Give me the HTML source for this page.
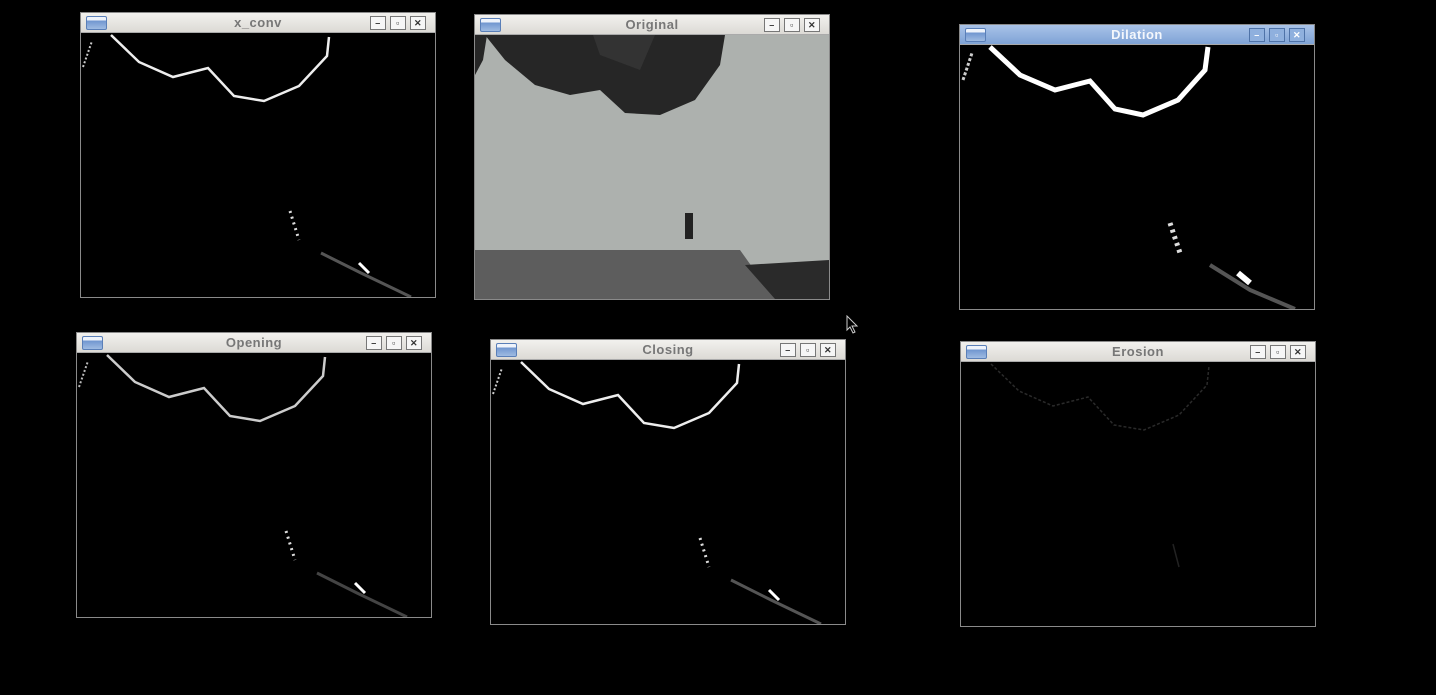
<!DOCTYPE html>
<html><head><style>
body{margin:0;width:1436px;height:695px;background:#000;position:relative;overflow:hidden;font-family:"Liberation Sans",sans-serif}
.w{position:absolute;width:354px;height:284px;border:1px solid #8a8a8a;background:#000}
.t{height:19px;background:linear-gradient(#f2f1ee,#dcdad5);border-bottom:1px solid #aaa;position:relative;text-align:center;font-weight:bold;font-size:13px;color:#777;line-height:19px;letter-spacing:.5px}
.b .t{background:linear-gradient(#a9c3e8,#7fa3d6);color:#f4f7fc}
.ic{position:absolute;left:5px;top:3px;width:19px;height:12px;border:1px solid #5a7fb8;background:linear-gradient(#eef3fb 30%,#6f95cf 30%,#9fbbe2);border-radius:2px}
.bt{position:absolute;top:3px;width:14px;height:12px;border:1px solid #777;background:#f6f6f6;font-size:9px;line-height:12px;color:#333}
.b .bt{border-color:#4f73a8;background:#8fb0de;color:#fff}
svg{position:absolute;left:0;top:20px}
</style></head><body>

<div class="w" style="left:80px;top:12px"><div class="t"><span class="ic"></span>x_conv<span class="bt" style="right:49px">–</span><span class="bt" style="right:29px">▫</span><span class="bt" style="right:9px">✕</span></div>
<svg width="354" height="264"><polyline points="30,2 58,29 92,44 127,35 153,63 183,68 218,53 246,23 248,4" fill="none" stroke="#eee" stroke-width="2.5"/><line x1="2" y1="34" x2="11" y2="8" stroke="#ccc" stroke-width="2" stroke-dasharray="2 2"/><line x1="209" y1="178" x2="218" y2="207" stroke="#ddd" stroke-width="3" stroke-dasharray="2 4"/><polyline points="240,220 280,240 330,264" fill="none" stroke="#555" stroke-width="3"/><line x1="278" y1="230" x2="288" y2="240" stroke="#fff" stroke-width="3"/></svg></div>

<div class="w" style="left:474px;top:14px"><div class="t"><span class="ic"></span>Original<span class="bt" style="right:49px">–</span><span class="bt" style="right:29px">▫</span><span class="bt" style="right:9px">✕</span></div>
<svg width="354" height="264"><rect width="354" height="264" fill="#adb1ae"/><polygon points="0,0 250,0 245,30 220,65 185,80 150,78 125,55 95,60 60,50 30,25 10,0" fill="#262626"/><polygon points="0,0 12,0 8,25 0,40" fill="#262626"/><polygon points="118,0 180,0 165,35 125,20" fill="#333"/><polygon points="0,215 265,215 290,250 330,264 0,264" fill="#5d5d5d"/><polygon points="270,230 354,225 354,264 300,264" fill="#2a2a2a"/><rect x="210" y="178" width="8" height="26" fill="#222"/></svg></div>

<div class="w b" style="left:959px;top:24px"><div class="t"><span class="ic"></span>Dilation<span class="bt" style="right:49px">–</span><span class="bt" style="right:29px">▫</span><span class="bt" style="right:9px">✕</span></div>
<svg width="354" height="264"><polyline points="30,2 60,30 95,45 130,36 155,64 183,70 218,55 245,25 248,2" fill="none" stroke="#fff" stroke-width="5"/><line x1="3" y1="35" x2="12" y2="8" stroke="#ccc" stroke-width="3" stroke-dasharray="3 2"/><line x1="210" y1="178" x2="220" y2="208" stroke="#ddd" stroke-width="5" stroke-dasharray="3 4"/><polyline points="250,220 290,245 335,264" fill="none" stroke="#555" stroke-width="4"/><line x1="278" y1="228" x2="290" y2="238" stroke="#fff" stroke-width="6"/></svg></div>

<div class="w" style="left:76px;top:332px"><div class="t"><span class="ic"></span>Opening<span class="bt" style="right:49px">–</span><span class="bt" style="right:29px">▫</span><span class="bt" style="right:9px">✕</span></div>
<svg width="354" height="264"><polyline points="30,2 58,29 92,44 127,35 153,63 183,68 218,53 246,23 248,4" fill="none" stroke="#ccc" stroke-width="2.5"/><line x1="2" y1="34" x2="11" y2="8" stroke="#bbb" stroke-width="2" stroke-dasharray="2 2"/><line x1="209" y1="178" x2="218" y2="207" stroke="#ddd" stroke-width="3" stroke-dasharray="2 4"/><polyline points="240,220 280,240 330,264" fill="none" stroke="#444" stroke-width="3"/><line x1="278" y1="230" x2="288" y2="240" stroke="#fff" stroke-width="3"/></svg></div>

<div class="w" style="left:490px;top:339px"><div class="t"><span class="ic"></span>Closing<span class="bt" style="right:49px">–</span><span class="bt" style="right:29px">▫</span><span class="bt" style="right:9px">✕</span></div>
<svg width="354" height="264"><polyline points="30,2 58,29 92,44 127,35 153,63 183,68 218,53 246,23 248,4" fill="none" stroke="#eee" stroke-width="2.5"/><line x1="2" y1="34" x2="11" y2="8" stroke="#ccc" stroke-width="2" stroke-dasharray="2 2"/><line x1="209" y1="178" x2="218" y2="207" stroke="#ddd" stroke-width="3" stroke-dasharray="2 4"/><polyline points="240,220 280,240 330,264" fill="none" stroke="#555" stroke-width="3"/><line x1="278" y1="230" x2="288" y2="240" stroke="#fff" stroke-width="3"/></svg></div>

<div class="w" style="left:960px;top:341px"><div class="t"><span class="ic"></span>Erosion<span class="bt" style="right:49px">–</span><span class="bt" style="right:29px">▫</span><span class="bt" style="right:9px">✕</span></div>
<svg width="354" height="264"><polyline points="30,2 58,29 92,44 127,35 153,63 183,68 218,53 246,23 248,4" fill="none" stroke="#2a2a2a" stroke-width="1.5" stroke-dasharray="3 2"/><line x1="212" y1="182" x2="218" y2="205" stroke="#222" stroke-width="1.5"/></svg></div>

<svg style="position:absolute;left:846px;top:315px" width="14" height="20"><path d="M1,1 L1,15 L4,12 L7,18 L9,17 L6,11 L11,11 Z" fill="#000" stroke="#ccc" stroke-width="1"/></svg>

</body></html>
